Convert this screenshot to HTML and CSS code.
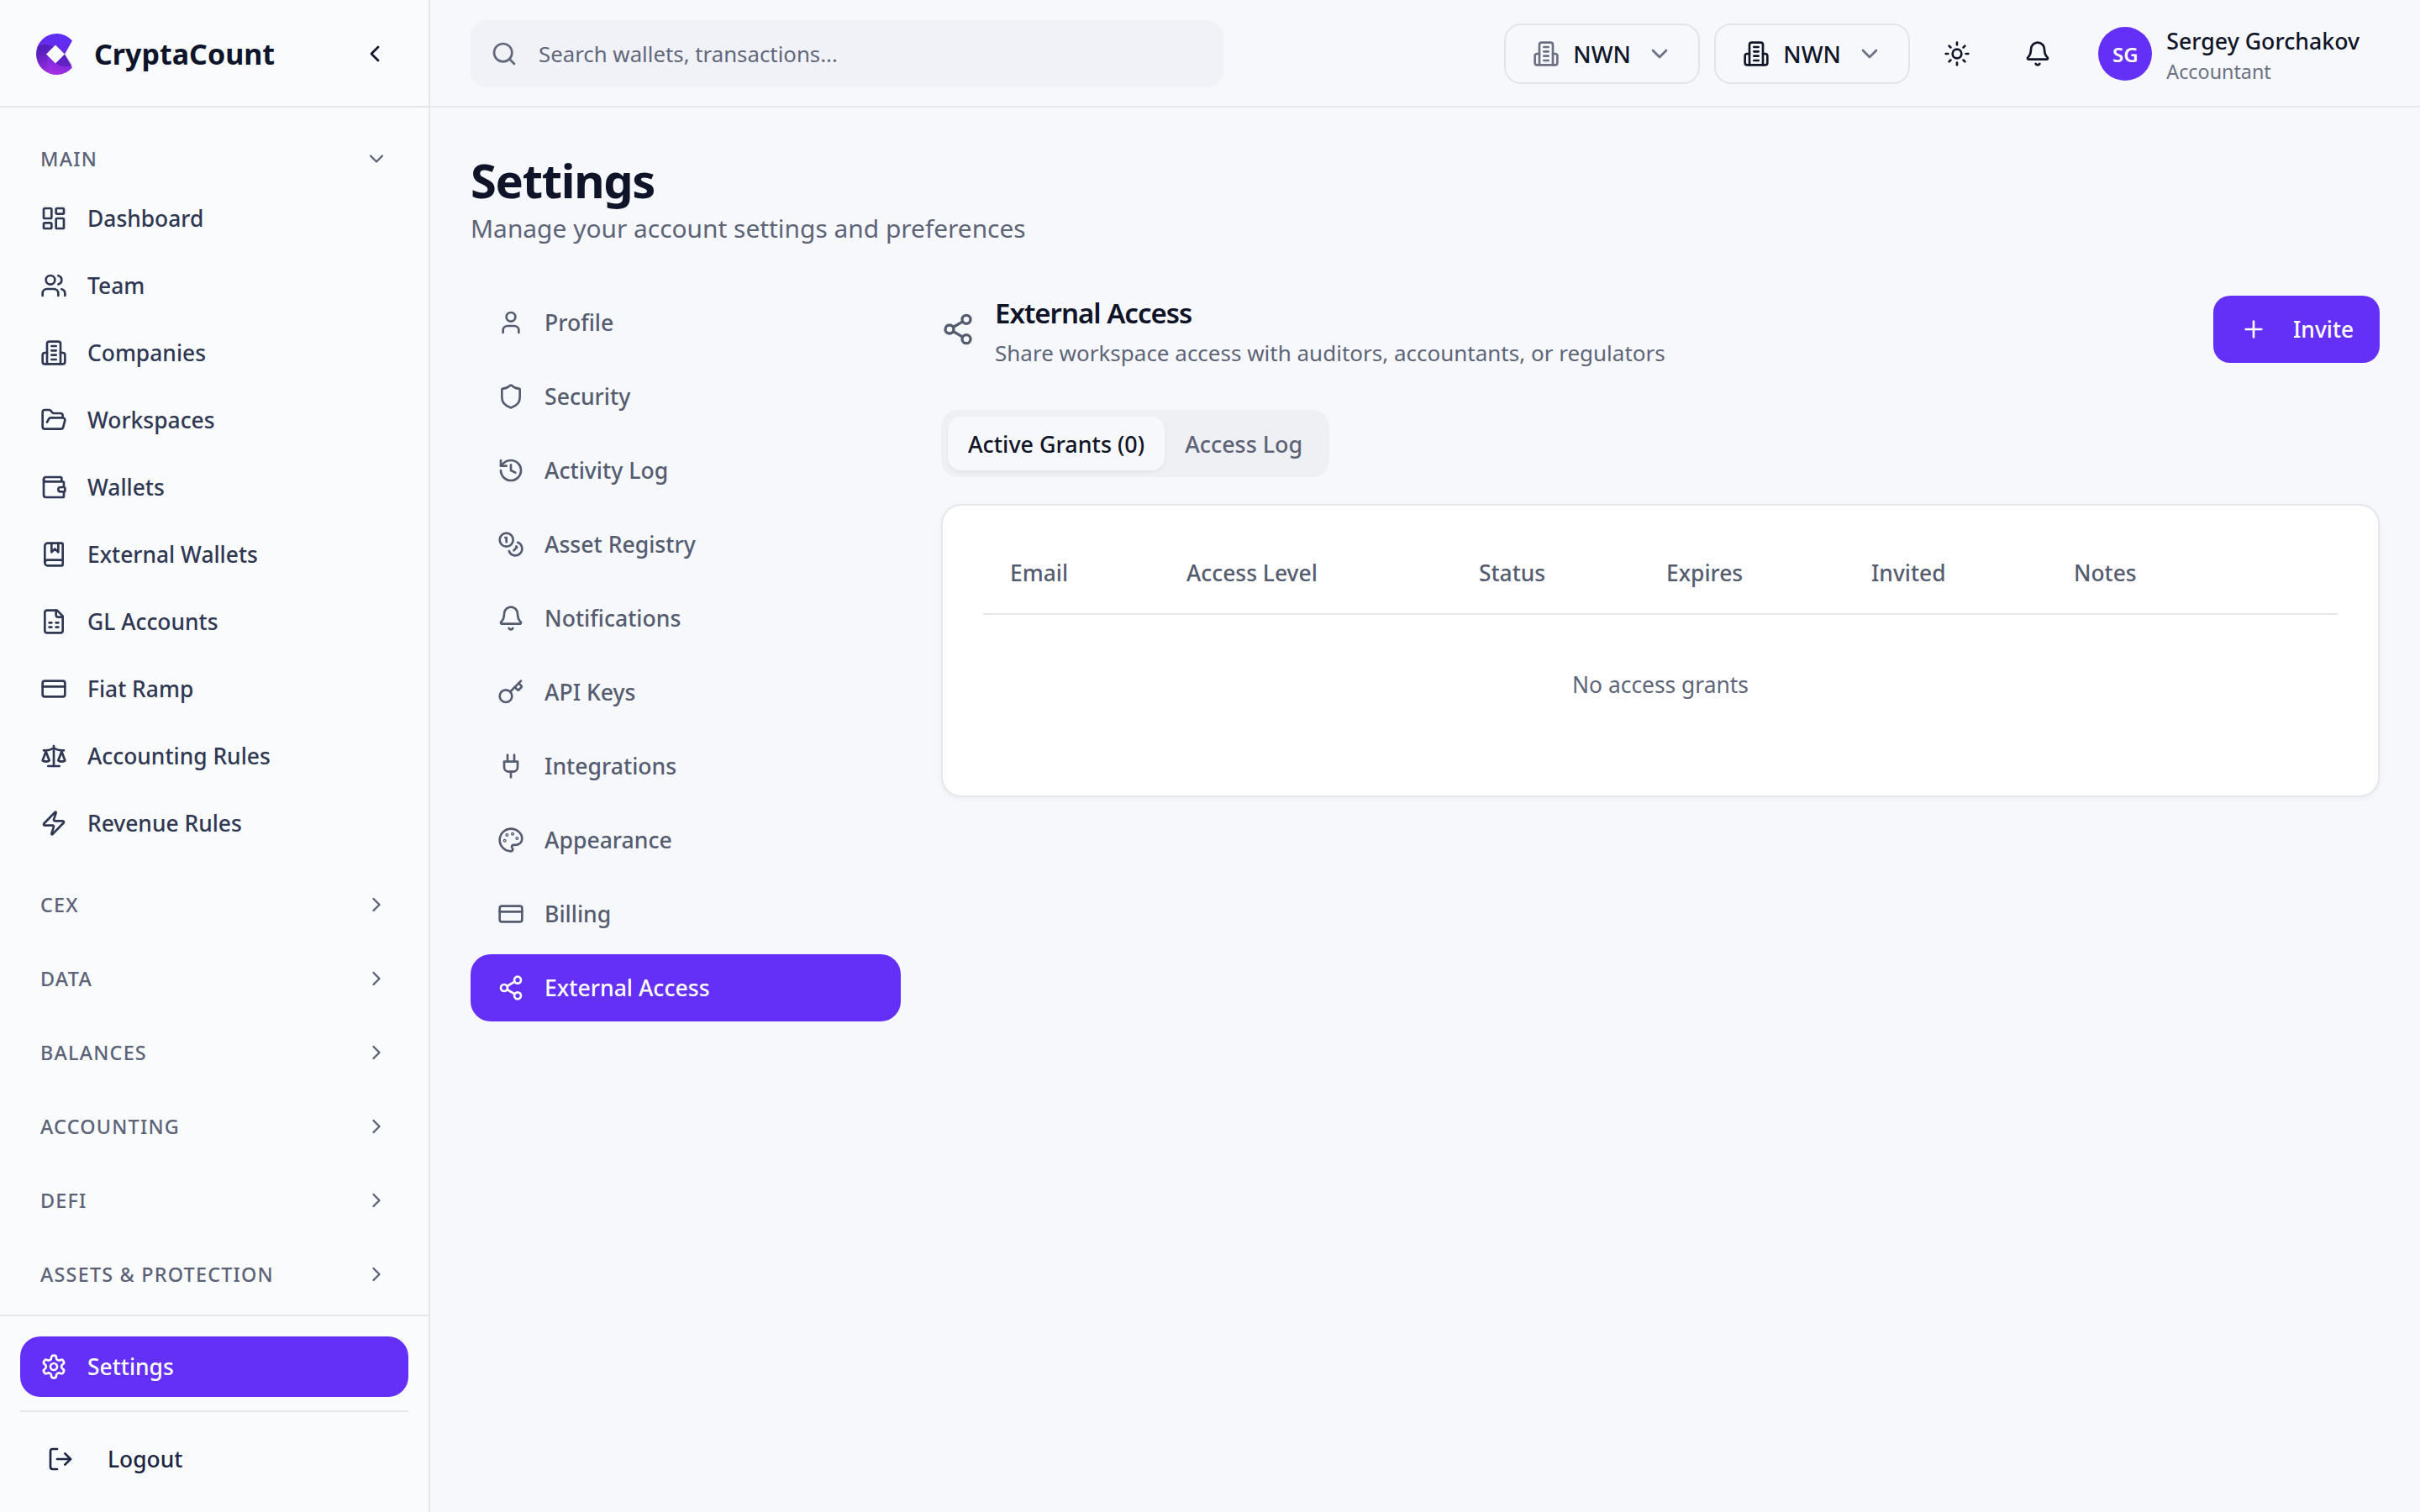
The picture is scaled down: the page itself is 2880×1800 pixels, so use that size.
FILE: index.html
```html
<!DOCTYPE html>
<html lang="en">
<head>
    <meta charset="UTF-8">
    <title>CryptaCount - Settings</title>
    <link rel="stylesheet" href="styles.css">
</head>
<body>
    <svg class="sprite" xmlns="http://www.w3.org/2000/svg">
        <symbol id="i-dashboard" viewBox="0 0 24 24"><rect x="3" y="3" width="7" height="9" rx="1"/><rect x="14" y="3" width="7" height="5" rx="1"/><rect x="14" y="12" width="7" height="9" rx="1"/><rect x="3" y="16" width="7" height="5" rx="1"/></symbol>
        <symbol id="i-users" viewBox="0 0 24 24"><path d="M16 21v-2a4 4 0 0 0-4-4H6a4 4 0 0 0-4 4v2"/><circle cx="9" cy="7" r="4"/><path d="M22 21v-2a4 4 0 0 0-3-3.87"/><path d="M16 3.13a4 4 0 0 1 0 7.75"/></symbol>
        <symbol id="i-building" viewBox="0 0 24 24"><path d="M6 22V4a2 2 0 0 1 2-2h8a2 2 0 0 1 2 2v18Z"/><path d="M6 12H4a2 2 0 0 0-2 2v6a2 2 0 0 0 2 2h2"/><path d="M18 12h2a2 2 0 0 1 2 2v6a2 2 0 0 1-2 2h-2"/><path d="M10 6h4"/><path d="M10 10h4"/><path d="M10 14h4"/><path d="M10 18h4"/></symbol>
        <symbol id="i-folder" viewBox="0 0 24 24"><path d="m6 14 1.5-2.9A2 2 0 0 1 9.24 10H20a2 2 0 0 1 1.94 2.5l-1.54 6a2 2 0 0 1-1.95 1.5H4a2 2 0 0 1-2-2V5a2 2 0 0 1 2-2h3.9a2 2 0 0 1 1.69.9l.81 1.2a2 2 0 0 0 1.67.9H18a2 2 0 0 1 2 2v2"/></symbol>
        <symbol id="i-wallet" viewBox="0 0 24 24"><path d="M19 7V4a1 1 0 0 0-1-1H5a2 2 0 0 0 0 4h15a1 1 0 0 1 1 1v4h-3a2 2 0 0 0 0 4h3a1 1 0 0 0 1-1v-2a1 1 0 0 0-1-1"/><path d="M3 5v14a2 2 0 0 0 2 2h15a1 1 0 0 0 1-1v-4"/></symbol>
        <symbol id="i-book" viewBox="0 0 24 24"><path d="M10 2v8l3-3 3 3V2"/><path d="M4 19.5v-15A2.5 2.5 0 0 1 6.5 2H19a1 1 0 0 1 1 1v18a1 1 0 0 1-1 1H6.5a1 1 0 0 1 0-5H20"/></symbol>
        <symbol id="i-sheet" viewBox="0 0 24 24"><path d="M15 2H6a2 2 0 0 0-2 2v16a2 2 0 0 0 2 2h12a2 2 0 0 0 2-2V7Z"/><path d="M14 2v4a2 2 0 0 0 2 2h4"/><path d="M8 13h2"/><path d="M14 13h2"/><path d="M8 17h2"/><path d="M14 17h2"/></symbol>
        <symbol id="i-card" viewBox="0 0 24 24"><rect x="2" y="5" width="20" height="14" rx="2"/><path d="M2 10h20"/></symbol>
        <symbol id="i-scale" viewBox="0 0 24 24"><path d="m16 16 3-8 3 8c-.87.65-1.92 1-3 1s-2.13-.35-3-1Z"/><path d="m2 16 3-8 3 8c-.87.65-1.92 1-3 1s-2.13-.35-3-1Z"/><path d="M7 21h10"/><path d="M12 3v18"/><path d="M3 7h2c2 0 5-1 7-2 2 1 5 2 7 2h2"/></symbol>
        <symbol id="i-zap" viewBox="0 0 24 24"><path d="M4 14a1 1 0 0 1-.78-1.63l9.9-10.2a.5.5 0 0 1 .86.46l-1.92 6.02A1 1 0 0 0 13 10h7a1 1 0 0 1 .78 1.63l-9.9 10.2a.5.5 0 0 1-.86-.46l1.92-6.02A1 1 0 0 0 11 14z"/></symbol>
        <symbol id="i-settings" viewBox="0 0 24 24"><path d="M12.22 2h-.44a2 2 0 0 0-2 2v.18a2 2 0 0 1-1 1.73l-.43.25a2 2 0 0 1-2 0l-.15-.08a2 2 0 0 0-2.73.73l-.22.38a2 2 0 0 0 .73 2.73l.15.1a2 2 0 0 1 1 1.72v.51a2 2 0 0 1-1 1.74l-.15.09a2 2 0 0 0-.73 2.73l.22.38a2 2 0 0 0 2.73.73l.15-.08a2 2 0 0 1 2 0l.43.25a2 2 0 0 1 1 1.73V20a2 2 0 0 0 2 2h.44a2 2 0 0 0 2-2v-.18a2 2 0 0 1 1-1.73l.43-.25a2 2 0 0 1 2 0l.15.08a2 2 0 0 0 2.73-.73l.22-.39a2 2 0 0 0-.73-2.73l-.15-.08a2 2 0 0 1-1-1.74v-.5a2 2 0 0 1 1-1.74l.15-.09a2 2 0 0 0 .73-2.73l-.22-.38a2 2 0 0 0-2.73-.73l-.15.08a2 2 0 0 1-2 0l-.43-.25a2 2 0 0 1-1-1.73V4a2 2 0 0 0-2-2z"/><circle cx="12" cy="12" r="3"/></symbol>
        <symbol id="i-logout" viewBox="0 0 24 24"><path d="M9 21H5a2 2 0 0 1-2-2V5a2 2 0 0 1 2-2h4"/><path d="m16 17 5-5-5-5"/><path d="M21 12H9"/></symbol>
        <symbol id="i-user" viewBox="0 0 24 24"><path d="M19 21v-2a4 4 0 0 0-4-4H9a4 4 0 0 0-4 4v2"/><circle cx="12" cy="7" r="4"/></symbol>
        <symbol id="i-shield" viewBox="0 0 24 24"><path d="M20 13c0 5-3.5 7.5-7.66 8.95a1 1 0 0 1-.67-.01C7.5 20.5 4 18 4 13V6a1 1 0 0 1 1-1c2 0 4.5-1.2 6.24-2.72a1.17 1.17 0 0 1 1.52 0C14.51 3.81 17 5 19 5a1 1 0 0 1 1 1z"/></symbol>
        <symbol id="i-history" viewBox="0 0 24 24"><path d="M3 12a9 9 0 1 0 9-9 9.75 9.75 0 0 0-6.74 2.74L3 8"/><path d="M3 3v5h5"/><path d="M12 7v5l4 2"/></symbol>
        <symbol id="i-coins" viewBox="0 0 24 24"><circle cx="8" cy="8" r="6"/><path d="M18.09 10.37A6 6 0 1 1 10.34 18"/><path d="M7 6h1v4"/><path d="m16.71 13.88.7.71-2.82 2.82"/></symbol>
        <symbol id="i-bell" viewBox="0 0 24 24"><path d="M10.268 21a2 2 0 0 0 3.464 0"/><path d="M3.262 15.326A1 1 0 0 0 4 17h16a1 1 0 0 0 .74-1.673C19.41 13.956 18 12.499 18 8A6 6 0 0 0 6 8c0 4.499-1.411 5.956-2.738 7.326"/></symbol>
        <symbol id="i-key" viewBox="0 0 24 24"><path d="m15.5 7.5 2.3 2.3a1 1 0 0 0 1.4 0l2.1-2.1a1 1 0 0 0 0-1.4L19 4"/><path d="m21 2-9.6 9.6"/><circle cx="7.5" cy="15.5" r="5.5"/></symbol>
        <symbol id="i-plug" viewBox="0 0 24 24"><path d="M12 22v-5"/><path d="M9 8V2"/><path d="M15 8V2"/><path d="M18 8v5a4 4 0 0 1-4 4h-4a4 4 0 0 1-4-4V8Z"/></symbol>
        <symbol id="i-palette" viewBox="0 0 24 24"><circle cx="13.5" cy="6.5" r=".5"/><circle cx="17.5" cy="10.5" r=".5"/><circle cx="8.5" cy="7.5" r=".5"/><circle cx="6.5" cy="12.5" r=".5"/><path d="M12 2C6.5 2 2 6.5 2 12s4.5 10 10 10c.926 0 1.648-.746 1.648-1.688 0-.437-.18-.835-.437-1.125-.29-.289-.438-.652-.438-1.125a1.64 1.64 0 0 1 1.668-1.668h1.996c3.051 0 5.555-2.503 5.555-5.554C21.965 6.012 17.461 2 12 2z"/></symbol>
        <symbol id="i-share" viewBox="0 0 24 24"><circle cx="18" cy="5" r="3"/><circle cx="6" cy="12" r="3"/><circle cx="18" cy="19" r="3"/><path d="m8.59 13.51 6.83 3.98"/><path d="m15.41 6.51-6.82 3.98"/></symbol>
        <symbol id="i-search" viewBox="0 0 24 24"><circle cx="11" cy="11" r="8"/><path d="m21 21-4.3-4.3"/></symbol>
        <symbol id="i-sun" viewBox="0 0 24 24"><circle cx="12" cy="12" r="4"/><path d="M12 2v2"/><path d="M12 20v2"/><path d="m4.93 4.93 1.41 1.41"/><path d="m17.66 17.66 1.41 1.41"/><path d="M2 12h2"/><path d="M20 12h2"/><path d="m6.34 17.66-1.41 1.41"/><path d="m19.07 4.93-1.41 1.41"/></symbol>
        <symbol id="i-left" viewBox="0 0 24 24"><path d="m15 18-6-6 6-6"/></symbol>
        <symbol id="i-right" viewBox="0 0 24 24"><path d="m9 18 6-6-6-6"/></symbol>
        <symbol id="i-down" viewBox="0 0 24 24"><path d="m6 9 6 6 6-6"/></symbol>
        <symbol id="i-plus" viewBox="0 0 24 24"><path d="M5 12h14"/><path d="M12 5v14"/></symbol>
    </svg>

    <div class="app">
        <aside class="sidebar">
            <div class="brand">
                <div class="brand-left">
                    <svg class="logo" viewBox="0 0 48 49">
                        <defs>
                            <linearGradient id="logoGrad" x1="0.7" y1="0" x2="0.45" y2="1">
                                <stop offset="0" stop-color="#5b2ff9"/>
                                <stop offset="0.5" stop-color="#6c28e4"/>
                                <stop offset="1" stop-color="#a92fe2"/>
                            </linearGradient>
                            <linearGradient id="logoFold" x1="0.2" y1="0" x2="0.8" y2="1">
                                <stop offset="0" stop-color="#3a1590" stop-opacity=".55"/>
                                <stop offset="1" stop-color="#3a1590" stop-opacity="0"/>
                            </linearGradient>
                        </defs>
                        <path fill="url(#logoGrad)" d="M46 8.500A24.500 24.500 0 1 0 46 40.500L37 24.500Z"/>
                        <path fill="url(#logoFold)" d="M5 15c7-3 13-2 17 0l4 3-8 6.500c-3 5-3 12 1 23C9 44 0 32 5 15Z"/>
                        <path fill="#3a1590" opacity=".4" d="M26 35.500 37 24.500 46 38c-6 2-14 2-20-2.500Z"/>
                        <path fill="#f9fbfd" d="M26 13.500 37 24.500 26 35.500 15 24.500Z"/>
                    </svg>
                    <span class="brand-name">CryptaCount</span>
                </div>
                <svg class="icon icon-back"><use href="#i-left"/></svg>
            </div>

            <div class="side-scroll">
                <div class="group-head group-open">
                    <span>MAIN</span>
                    <svg class="icon icon-sm"><use href="#i-down"/></svg>
                </div>
                <nav class="main-nav">
                    <a class="nav-item"><svg class="icon"><use href="#i-dashboard"/></svg>Dashboard</a>
                    <a class="nav-item"><svg class="icon"><use href="#i-users"/></svg>Team</a>
                    <a class="nav-item"><svg class="icon"><use href="#i-building"/></svg>Companies</a>
                    <a class="nav-item"><svg class="icon"><use href="#i-folder"/></svg>Workspaces</a>
                    <a class="nav-item"><svg class="icon"><use href="#i-wallet"/></svg>Wallets</a>
                    <a class="nav-item"><svg class="icon"><use href="#i-book"/></svg>External Wallets</a>
                    <a class="nav-item"><svg class="icon"><use href="#i-sheet"/></svg>GL Accounts</a>
                    <a class="nav-item"><svg class="icon"><use href="#i-card"/></svg>Fiat Ramp</a>
                    <a class="nav-item"><svg class="icon"><use href="#i-scale"/></svg>Accounting Rules</a>
                    <a class="nav-item"><svg class="icon"><use href="#i-zap"/></svg>Revenue Rules</a>
                </nav>
                <div class="groups">
                    <div class="group-head"><span>CEX</span><svg class="icon icon-sm"><use href="#i-right"/></svg></div>
                    <div class="group-head"><span>DATA</span><svg class="icon icon-sm"><use href="#i-right"/></svg></div>
                    <div class="group-head"><span>BALANCES</span><svg class="icon icon-sm"><use href="#i-right"/></svg></div>
                    <div class="group-head"><span>ACCOUNTING</span><svg class="icon icon-sm"><use href="#i-right"/></svg></div>
                    <div class="group-head"><span>DEFI</span><svg class="icon icon-sm"><use href="#i-right"/></svg></div>
                    <div class="group-head"><span>ASSETS &amp; PROTECTION</span><svg class="icon icon-sm"><use href="#i-right"/></svg></div>
                </div>
            </div>

            <div class="side-foot">
                <a class="nav-item nav-active"><svg class="icon"><use href="#i-settings"/></svg>Settings</a>
                <div class="foot-line"></div>
                <a class="logout"><svg class="icon"><use href="#i-logout"/></svg>Logout</a>
            </div>
        </aside>

        <div class="right">
            <header class="topbar">
                <div class="search">
                    <svg class="icon icon-search"><use href="#i-search"/></svg>
                    <span>Search wallets, transactions...</span>
                </div>
                <div class="top-actions">
                    <button class="org-btn org-muted"><svg class="icon"><use href="#i-building"/></svg><span>NWN</span><svg class="icon icon-chev"><use href="#i-down"/></svg></button>
                    <button class="org-btn"><svg class="icon"><use href="#i-building"/></svg><span>NWN</span><svg class="icon icon-chev"><use href="#i-down"/></svg></button>
                    <svg class="icon icon-top icon-sun"><use href="#i-sun"/></svg>
                    <svg class="icon icon-top icon-bell"><use href="#i-bell"/></svg>
                    <div class="user">
                        <div class="avatar">SG</div>
                        <div class="user-text">
                            <div class="user-name">Sergey Gorchakov</div>
                            <div class="user-role">Accountant</div>
                        </div>
                    </div>
                </div>
            </header>

            <main class="content">
                <h1 class="page-title">Settings</h1>
                <p class="page-sub">Manage your account settings and preferences</p>

                <div class="settings">
                    <nav class="settings-nav">
                        <a class="set-item"><svg class="icon"><use href="#i-user"/></svg>Profile</a>
                        <a class="set-item"><svg class="icon"><use href="#i-shield"/></svg>Security</a>
                        <a class="set-item"><svg class="icon"><use href="#i-history"/></svg>Activity Log</a>
                        <a class="set-item"><svg class="icon"><use href="#i-coins"/></svg>Asset Registry</a>
                        <a class="set-item"><svg class="icon"><use href="#i-bell"/></svg>Notifications</a>
                        <a class="set-item"><svg class="icon"><use href="#i-key"/></svg>API Keys</a>
                        <a class="set-item"><svg class="icon"><use href="#i-plug"/></svg>Integrations</a>
                        <a class="set-item"><svg class="icon"><use href="#i-palette"/></svg>Appearance</a>
                        <a class="set-item"><svg class="icon"><use href="#i-card"/></svg>Billing</a>
                        <a class="set-item set-active"><svg class="icon"><use href="#i-share"/></svg>External Access</a>
                    </nav>

                    <section class="panel">
                        <div class="panel-head">
                            <div class="panel-title-wrap">
                                <svg class="icon icon-panel"><use href="#i-share"/></svg>
                                <div class="panel-text">
                                    <h2 class="panel-title">External Access</h2>
                                    <p class="panel-sub">Share workspace access with auditors, accountants, or regulators</p>
                                </div>
                            </div>
                            <button class="invite"><svg class="icon"><use href="#i-plus"/></svg>Invite</button>
                        </div>

                        <div class="tabs">
                            <div class="tab tab-active">Active Grants (0)</div>
                            <div class="tab">Access Log</div>
                        </div>

                        <div class="card">
                            <table class="grants">
                                <colgroup>
                                    <col class="col-email"><col class="col-level"><col class="col-status"><col class="col-expires"><col class="col-invited"><col class="col-notes">
                                </colgroup>
                                <thead>
                                    <tr><th>Email</th><th>Access Level</th><th>Status</th><th>Expires</th><th>Invited</th><th>Notes</th></tr>
                                </thead>
                                <tbody>
                                    <tr><td colspan="6">No access grants</td></tr>
                                </tbody>
                            </table>
                        </div>
                    </section>
                </div>
            </main>
        </div>
    </div>
</body>
</html>
```

FILE: styles.css
```css
* {
    box-sizing: border-box;
}
html, body {
    margin: 0;
    height: 100%;
}
body {
    font-family: "Noto Sans", "Open Sans", sans-serif;
    font-size: 26.4px;
    background: #f6f8fc;
    color: #101528;
}
h1, h2, p {
    margin: 0;
}
.sprite {
    display: none;
}
.icon {
    width: 32px;
    height: 32px;
    flex: none;
    fill: none;
    stroke: currentColor;
    stroke-width: 2;
    stroke-linecap: round;
    stroke-linejoin: round;
}
.app {
    display: flex;
    height: 1800px;
}

/* sidebar */
.sidebar {
    width: 512px;
    flex: none;
    display: flex;
    flex-direction: column;
    background: #f9fbfd;
    border-right: 2px solid #e5e7eb;
}
.brand {
    height: 128px;
    flex: none;
    display: flex;
    align-items: center;
    justify-content: space-between;
    padding: 2px 48px 0 40px;
    border-bottom: 2px solid #e5e7eb;
}
.brand-left {
    display: flex;
    align-items: center;
    gap: 24px;
}
.logo {
    width: 48px;
    height: 49px;
}
.brand-name {
    font-size: 34px;
    font-weight: 700;
    color: #0e1429;
}
.icon-back {
    color: #101528;
}
.side-scroll {
    flex: 1;
    padding: 32px 24px 0;
}
.group-head {
    height: 88px;
    display: flex;
    align-items: center;
    justify-content: space-between;
    padding: 0 24px;
    font-size: 23.4px;
    font-weight: 500;
    letter-spacing: 1.2px;
    color: #5c6378;
}
.group-open {
    height: 58px;
    margin-bottom: 6px;
}
.icon-sm {
    width: 28px;
    height: 28px;
}
.main-nav {
    display: flex;
    flex-direction: column;
    gap: 8px;
    margin-bottom: 17px;
}
.nav-item {
    height: 72px;
    display: flex;
    align-items: center;
    gap: 24px;
    padding-left: 24px;
    font-weight: 500;
    color: #2f3752;
}
.nav-active {
    background: #6430f8;
    color: #fff;
    border-radius: 24px;
}
.side-foot {
    flex: none;
    height: 235px;
    padding: 24px 24px 0;
    border-top: 2px solid #e5e7eb;
}
.foot-line {
    height: 2px;
    background: #e5e7eb;
    margin-top: 16px;
}
.logout {
    display: flex;
    align-items: center;
    gap: 40px;
    height: 112px;
    padding-left: 32px;
    font-weight: 500;
    color: #1c2541;
}

/* top bar */
.right {
    flex: 1;
    min-width: 0;
    display: flex;
    flex-direction: column;
}
.topbar {
    height: 128px;
    flex: none;
    display: flex;
    align-items: center;
    justify-content: space-between;
    padding: 2px 48px 0;
    border-bottom: 2px solid #e5e7eb;
}
.search {
    width: 896px;
    height: 80px;
    display: flex;
    align-items: center;
    gap: 25px;
    padding-left: 24px;
    background: #f1f2f7;
    border-radius: 20px;
    font-size: 25.8px;
    color: #62687b;
}
.icon-search {
    color: #62687b;
}
.top-actions {
    display: flex;
    align-items: center;
}
.org-btn {
    width: 233px;
    height: 72px;
    display: flex;
    align-items: center;
    gap: 16px;
    padding: 0 0 0 32px;
    margin-right: 17px;
    font: 500 27.5px "Noto Sans", sans-serif;
    color: #101528;
    background: transparent;
    border: 2px solid #e3e5ea;
    border-radius: 20px;
}
.org-muted .icon:first-child {
    color: #6b7183;
}
.icon-chev {
    margin-left: 2px;
    color: #6b7183;
}
.icon-top {
    color: #101528;
}
.icon-sun {
    margin: 0 64px 0 23px;
}
.icon-bell {
    margin-right: 56px;
}
.user {
    display: flex;
    align-items: center;
    gap: 17px;
    padding-right: 24px;
}
.avatar {
    width: 64px;
    height: 64px;
    border-radius: 50%;
    background: #6430f8;
    color: #fff;
    font-size: 24px;
    font-weight: 600;
    display: flex;
    align-items: center;
    justify-content: center;
}
.user-text {
    margin-top: 6px;
}
.user-name {
    font-size: 26.7px;
    font-weight: 500;
    line-height: 36px;
}
.user-role {
    font-size: 23.3px;
    line-height: 36px;
    color: #6b7183;
}

/* page */
.content {
    flex: 1;
    padding: 52px 48px 0;
}
.page-title {
    font-size: 56px;
    font-weight: 700;
    letter-spacing: -1.3px;
    line-height: 68px;
    color: #0f1429;
}
.page-sub {
    font-size: 29.9px;
    line-height: 48px;
    color: #5e6478;
}
.settings {
    display: flex;
    gap: 48px;
    margin-top: 48px;
}
.settings-nav {
    width: 512px;
    flex: none;
    display: flex;
    flex-direction: column;
    gap: 8px;
}
.set-item {
    height: 80px;
    display: flex;
    align-items: center;
    gap: 24px;
    padding-left: 32px;
    font-size: 26.6px;
    font-weight: 500;
    color: #555c70;
}
.set-active {
    background: #6430f8;
    color: #fff;
    border-radius: 24px;
}
.panel {
    flex: 1;
    min-width: 0;
    padding-top: 8px;
}
.panel-head {
    display: flex;
    align-items: center;
    justify-content: space-between;
    height: 80px;
}
.panel-title-wrap {
    display: flex;
    align-items: center;
    gap: 24px;
}
.icon-panel {
    width: 40px;
    height: 40px;
    color: #555c70;
}
.panel-text {
    margin-top: 8px;
}
.panel-title {
    font-size: 33px;
    font-weight: 600;
    letter-spacing: -1px;
    line-height: 48px;
    color: #0f1429;
}
.panel-sub {
    font-size: 26px;
    line-height: 46px;
    color: #5e6478;
}
.invite {
    width: 198px;
    height: 80px;
    display: flex;
    align-items: center;
    gap: 31px;
    padding-left: 32px;
    font: 500 26.4px "Noto Sans", sans-serif;
    color: #fff;
    background: #6430f8;
    border: none;
    border-radius: 20px;
}
.tabs {
    display: flex;
    width: fit-content;
    margin-top: 56px;
    padding: 8px;
    background: #eff0f4;
    border-radius: 20px;
}
.tab {
    height: 64px;
    display: flex;
    align-items: center;
    padding: 0 24px;
    font-size: 26.9px;
    font-weight: 500;
    color: #5e6478;
}
.tab-active {
    background: #f7f8fb;
    color: #101528;
    border-radius: 16px;
    box-shadow: 0 2px 4px rgba(16, 21, 40, 0.06);
}
.card {
    margin-top: 32px;
    height: 349px;
    padding: 32px 48px 48px;
    background: #fff;
    border: 2px solid #e5e7eb;
    border-radius: 24px;
    box-shadow: 0 2px 6px rgba(16, 21, 40, 0.05);
}
.grants {
    width: 100%;
    border-collapse: collapse;
    table-layout: fixed;
}
.col-email { width: 210px; }
.col-level { width: 348px; }
.col-status { width: 223px; }
.col-expires { width: 244px; }
.col-invited { width: 241px; }
.grants th {
    height: 97px;
    padding: 0 32px;
    text-align: left;
    font-weight: 500;
    color: #555c70;
    border-bottom: 2px solid #e5e7eb;
}
.grants td {
    height: 167px;
    text-align: center;
    color: #5e6478;
}
```
